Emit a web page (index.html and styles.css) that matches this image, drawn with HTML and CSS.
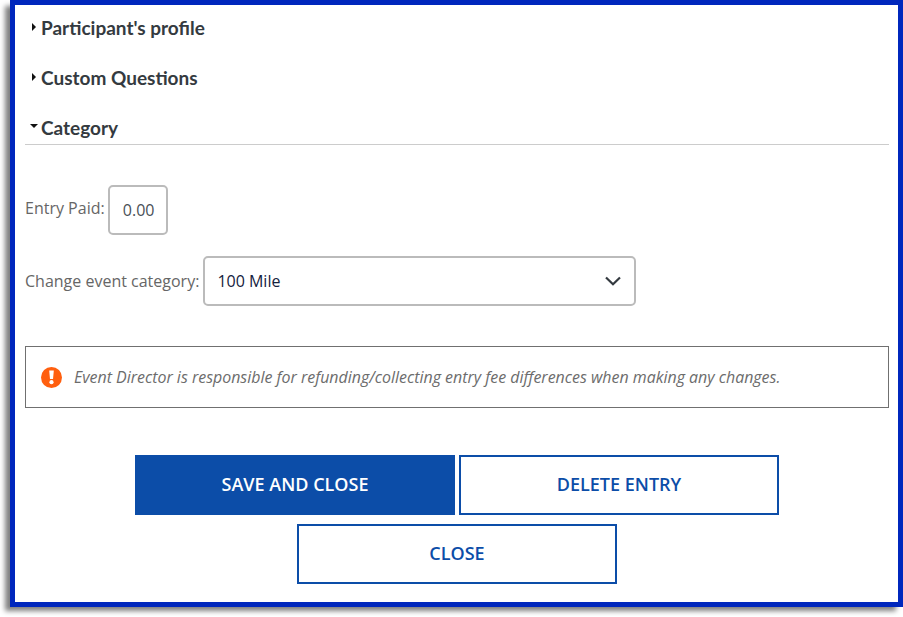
FILE: index.html
```html
<!DOCTYPE html>
<html lang="en">
<head>
    <meta charset="UTF-8">
    <title>Edit Entry</title>
    <link rel="stylesheet" href="styles.css">
</head>
<body>
    <div class="frame">
        <details class="section">
            <summary>Participant's profile</summary>
        </details>
        <details class="section">
            <summary>Custom Questions</summary>
        </details>
        <details class="section" open>
            <summary>Category</summary>
            <div class="section-body">
                <div class="field field-paid">
                    <label for="entry-paid">Entry Paid:</label>
                    <input type="text" id="entry-paid" class="paid-input" value="0.00">
                </div>
                <div class="field field-category">
                    <label for="event-category">Change event category:</label>
                    <div class="select-box" id="event-category">
                        <span>100 Mile</span>
                        <svg class="chevron" width="16" height="10" viewBox="0 0 16 10">
                            <path d="M1 1.5 L8 8.2 L15 1.5" fill="none" stroke="#343a40" stroke-width="2.2"/>
                        </svg>
                    </div>
                </div>
                <div class="notice">
                    <svg class="notice-icon" width="21" height="21" viewBox="0 0 21 21">
                        <circle cx="10.5" cy="10.5" r="10.5" fill="#ff5f0f"/>
                        <path d="M8.2 3.5 H12.8 L12 12 H9 Z" fill="#fff"/>
                        <circle cx="10.5" cy="15.2" r="2.1" fill="#fff"/>
                    </svg>
                    <em>Event Director is responsible for refunding/collecting entry fee differences when making any changes.</em>
                </div>
            </div>
        </details>
        <div class="actions">
            <button class="btn btn-primary">SAVE AND CLOSE</button>
            <button class="btn">DELETE ENTRY</button>
            <button class="btn">CLOSE</button>
        </div>
    </div>
</body>
</html>
```

FILE: styles.css
```css
html, body {
    margin: 0;
    padding: 0;
    background-color: #fff;
}
body {
    font-family: 'Open Sans', sans-serif;
    font-size: 16px;
    color: #666;
    height: 617px;
    overflow: hidden;
}
.frame {
    box-sizing: border-box;
    width: 893px;
    height: 607px;
    margin-left: 10px;
    padding: 0 9px 0 10px;
    background: #fff;
    border: 5px solid #0027bd;
    box-shadow: -6px 5px 5px -1px #808080;
}
.section summary {
    box-sizing: border-box;
    display: flex;
    height: 50px;
    padding-top: 13px;
    font-family: 'Lato', sans-serif;
    font-size: 19px;
    font-weight: 700;
    line-height: 20px;
    color: #343a40;
    list-style: none;
    cursor: pointer;
}
.section summary::-webkit-details-marker {
    display: none;
}
.section summary::before {
    content: "";
    width: 0;
    height: 0;
    margin: 5px 5px 0 7px;
    border-top: 4px solid transparent;
    border-bottom: 4px solid transparent;
    border-left: 4px solid #111;
}
.section[open] summary {
    height: 40px;
    border-bottom: 1px solid #ccc;
}
.section[open] summary::before {
    margin: 6px 3px 0 5px;
    border-top: 4.5px solid #111;
    border-bottom: 0;
    border-left: 4px solid transparent;
    border-right: 4px solid transparent;
}
.section-body {
    padding-top: 40px;
}
.field {
    display: flex;
    align-items: center;
    gap: 4px;
}
.field-paid {
    gap: 3px;
}
.field-paid label {
    margin-bottom: 4px;
}
.field-category {
    margin-top: 21px;
}
.paid-input {
    box-sizing: border-box;
    width: 60px;
    height: 50px;
    padding: 0 0 0 2px;
    text-align: center;
    font-family: 'Open Sans', sans-serif;
    font-size: 16px;
    color: #495057;
    border: 2px solid #bbb;
    border-radius: 5px;
    outline: none;
}
.select-box {
    box-sizing: border-box;
    display: flex;
    align-items: center;
    justify-content: space-between;
    width: 433px;
    height: 50px;
    padding: 0 13px 0 12px;
    color: #14213d;
    border: 2px solid #bbb;
    border-radius: 5px;
}
.notice {
    box-sizing: border-box;
    display: flex;
    align-items: center;
    gap: 12px;
    height: 62px;
    margin-top: 40px;
    padding-left: 15px;
    border: 1px solid #707070;
}
.notice em {
    font-size: 15.95px;
    color: #6c6c6c;
}
.actions {
    display: flex;
    flex-wrap: wrap;
    justify-content: center;
    gap: 9px 4px;
    margin-top: 47px;
}
.btn {
    box-sizing: border-box;
    width: 320px;
    height: 60px;
    padding-bottom: 4px;
    font-family: 'Open Sans', sans-serif;
    font-size: 18px;
    font-weight: 600;
    color: #0c4da8;
    background: #fff;
    border: 2px solid #0c4da8;
    cursor: pointer;
}
.btn-primary {
    color: #fff;
    background-color: #0c4da8;
}
```
